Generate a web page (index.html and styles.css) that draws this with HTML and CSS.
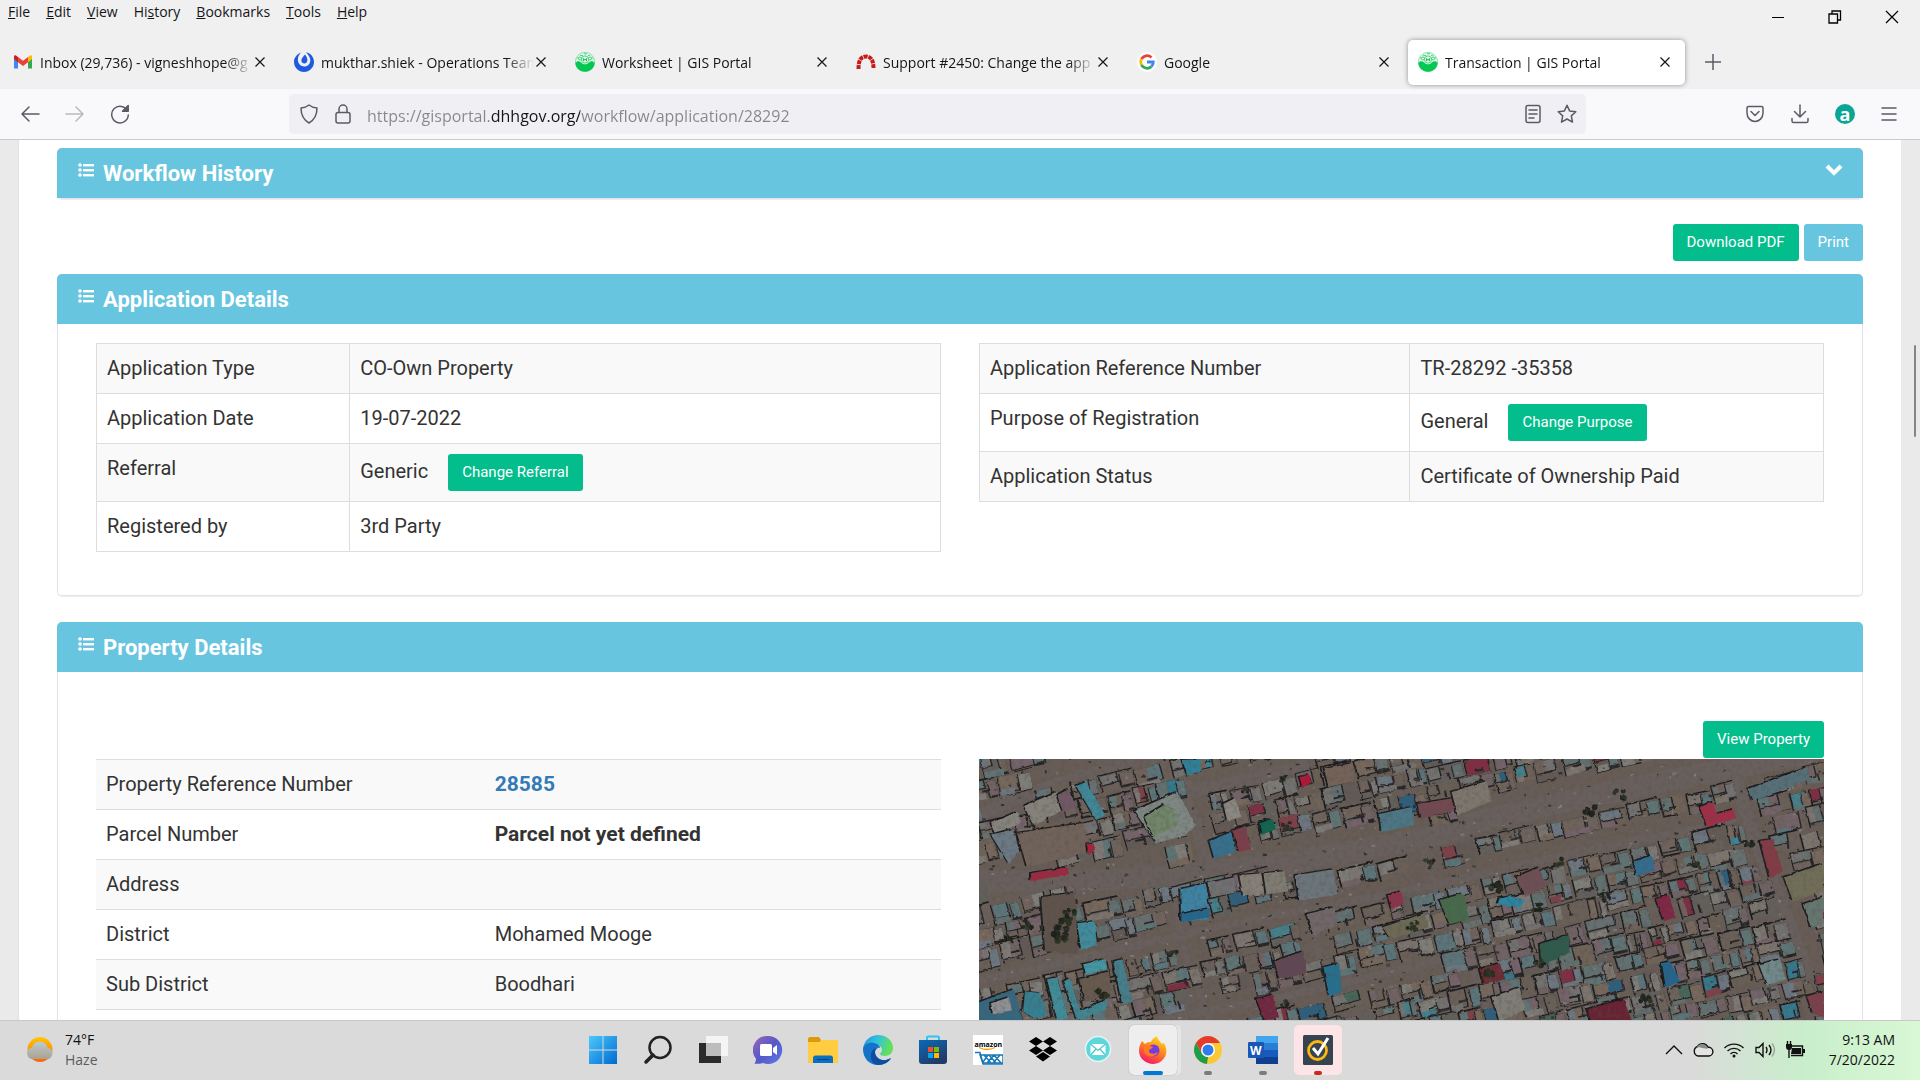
FILE: index.html
```html
<!DOCTYPE html>
<html lang="en">
<head>
<meta charset="utf-8">
<title>Transaction | GIS Portal</title>
<link rel="stylesheet" href="styles.css">
</head>
<body>
<svg class="defs" width="0" height="0" aria-hidden="true">
  <defs>
    <symbol id="close" viewBox="0 0 10 10"><path d="M.5.5l9 9M9.5.5l-9 9" fill="none" stroke="currentColor" stroke-width="1.2"/></symbol>
    <symbol id="list" viewBox="0 0 16 14"><g fill="currentColor"><circle cx="2" cy="2" r="1.8"/><circle cx="2" cy="7" r="1.8"/><circle cx="2" cy="12" r="1.8"/><rect x="5" y="1" width="11" height="2.4"/><rect x="5" y="6" width="11" height="2.4"/><rect x="5" y="11" width="11" height="2.4"/></g></symbol>
    <symbol id="gis" viewBox="0 0 20 20"><circle cx="10" cy="10" r="9.6" fill="#e2f8e9" stroke="#6fdc97" stroke-width=".8"/><g fill="none" stroke="#2fc96b" stroke-width=".8"><path d="M5 3.500h3M9 1.800h3M13 3.500h2M2 6h2M16 6h2"/><circle cx="5" cy="6.500" r="1.500"/><circle cx="15" cy="6.500" r="1.500"/><circle cx="10" cy="7.500" r="3.600"/></g><path d="M8.600 6.200v3M11.400 6.200v3M8.600 7.700h2.800" stroke="#0fc157" stroke-width="1"/><path d="M.4 11C2 8.500 4.500 8.600 6.500 10.800c2 2 5 2 7 0 2-2.200 4.500-2.300 6.100.2C19.400 16 15.300 19.700 10 19.700S.6 16 .4 11z" fill="#05c853"/></symbol>
  </defs>
</svg>

<header class="browser">
  <div class="menubar">
    <nav class="menus">
      <button><u>F</u>ile</button><button><u>E</u>dit</button><button><u>V</u>iew</button><button>Hi<u>s</u>tory</button><button><u>B</u>ookmarks</button><button><u>T</u>ools</button><button><u>H</u>elp</button>
    </nav>
    <div class="window-controls">
      <button aria-label="Minimize"><svg width="14" height="14"><path d="M1 7.500h12" stroke="#000"/></svg></button>
      <button aria-label="Restore"><svg width="14" height="14" fill="none" stroke="#000" stroke-width="1.300"><path d="M1 4h8.500v9H1zM4 4V1h8.500v9H9.500"/></svg></button>
      <button aria-label="Close"><svg width="14" height="14"><path d="M1 1l12 12M13 1L1 13" stroke="#000" stroke-width="1.200"/></svg></button>
    </div>
  </div>

  <div class="tabs">
    <div class="tab"><svg class="fav" viewBox="0 0 20 20"><path d="M1 4.500v12h4V9z" fill="#4285f4"/><path d="M19 4.500v12h-4V9z" fill="#34a853"/><path d="M15 5l2-1.500c1-.7 2 0 2 1.200V7l-4 3.200z" fill="#fbbc04"/><path d="M5 5l5 3.800L15 5v5.200L10 14l-5-3.800z" fill="#ea4335"/><path d="M1 7V4.700c0-1.200 1-1.900 2-1.200L5 5v5.200z" fill="#c5221f"/></svg><span class="tab-title">Inbox (29,736) - vigneshhope@g</span><button class="tab-close" aria-label="Close tab"><svg><use href="#close"/></svg></button></div>
    <div class="tab"><svg class="fav" viewBox="0 0 20 20"><path d="M12 .3C17 1.200 20 5.500 20 10c0 5.500-4.500 10-10 10S0 15.500 0 10C0 5.500 3 2 7 .5 4.500 3 3.700 5.500 3.900 8.600 4.200 12 7 14.500 10.300 14.500c3.400 0 6.200-2.700 6-6.500C16.200 5.500 14.500 3 12 .3z" fill="#1e5ae0"/><path d="M11 2.500c2 2.400 2.600 4.600 2.300 6.300-.3 1.900-1.700 2.900-3.300 2.700-1.800-.2-2.900-1.700-2.600-3.500C7.700 6.200 9.500 4 11 2.500z" fill="#1e5ae0"/></svg><span class="tab-title">mukthar.shiek - Operations Team</span><button class="tab-close" aria-label="Close tab"><svg><use href="#close"/></svg></button></div>
    <div class="tab"><svg class="fav"><use href="#gis"/></svg><span class="tab-title">Worksheet | GIS Portal</span><button class="tab-close" aria-label="Close tab"><svg><use href="#close"/></svg></button></div>
    <div class="tab"><svg class="fav" viewBox="0 0 20 20"><path d="M2.500 17C2.500 8 5 4.500 10 4.500S17.500 8 17.500 17" fill="none" stroke="#c71a1a" stroke-width="4" stroke-dasharray="3.900 .8"/></svg><span class="tab-title">Support #2450: Change the app</span><button class="tab-close" aria-label="Close tab"><svg><use href="#close"/></svg></button></div>
    <div class="tab"><svg class="fav" viewBox="0 0 20 20"><circle cx="10" cy="10" r="10" fill="#fff"/><g fill="none" stroke-width="2.800"><path d="M14.500 5.600A6.300 6.300 0 0 0 4.500 7" stroke="#ea4335"/><path d="M4.500 7a6.300 6.300 0 0 0 0 6" stroke="#fbbc05"/><path d="M4.500 13a6.300 6.300 0 0 0 9.800 1.600" stroke="#34a853"/><path d="M14.300 14.600A6.300 6.300 0 0 0 16.300 10H10" stroke="#4285f4"/></g></svg><span class="tab-title">Google</span><button class="tab-close" aria-label="Close tab"><svg><use href="#close"/></svg></button></div>
    <div class="tab active"><svg class="fav"><use href="#gis"/></svg><span class="tab-title">Transaction | GIS Portal</span><button class="tab-close" aria-label="Close tab"><svg><use href="#close"/></svg></button></div>
    <button class="new-tab" aria-label="New tab"><svg width="16" height="16"><path d="M8 0v16M0 8h16" stroke="#5b5b66" stroke-width="1.500"/></svg></button>
  </div>

  <div class="toolbar">
    <div class="nav-buttons">
      <button aria-label="Back"><svg width="20" height="20" class="line"><path d="M19 10H2M9 3l-7 7 7 7"/></svg></button>
      <button aria-label="Forward" disabled><svg width="20" height="20" class="line"><path d="M1 10h17M11 3l7 7-7 7"/></svg></button>
      <button aria-label="Reload"><svg width="20" height="20" class="line"><path d="M17.500 7A8.300 8.300 0 1 0 18.300 11M12.500 7.200h5.700V1.500z"/><path d="M13.500 6.800h4.500V2.300z" fill="currentColor"/></svg></button>
    </div>
    <div class="urlbar">
      <svg width="20" height="20" class="line"><path d="M10 1c2.500 2 5 2.800 8 3 0 7-2 11.500-8 15-6-3.500-8-8-8-15 3-.2 5.500-1 8-3z"/></svg>
      <svg width="18" height="20" class="line"><rect x="2" y="8.500" width="14" height="10.500" rx="2"/><path d="M5 8.500V5a4 4 0 0 1 8 0v3.500"/></svg>
      <input class="url" type="text" aria-label="Address" value="https://gisportal.dhhgov.org/workflow/application/28292">
      <button aria-label="Reader view"><svg width="18" height="20" class="line"><rect x="2" y="1.500" width="14" height="17" rx="2"/><path d="M5 6h8M5 10h8M5 14h5"/></svg></button>
      <button aria-label="Bookmark"><svg width="20" height="20" class="line"><path d="M10 1.300l2.600 5.600 6.200.8-4.500 4.200 1.200 6.200L10 15l-5.500 3.100 1.200-6.200L1.200 7.700l6.200-.8z"/></svg></button>
    </div>
    <div class="tools">
      <button aria-label="Pocket"><svg width="20" height="20" class="line"><path d="M3.500 2.500h13c1 0 1.500.5 1.500 1.500v5c0 5-4 8.500-8 8.500S2 14 2 9V4c0-1 .5-1.500 1.500-1.500z"/><path d="M6 7.500l4 4 4-4"/></svg></button>
      <button aria-label="Downloads"><svg width="20" height="20" class="line"><path d="M10 1v12M4.500 7.500L10 13l5.500-5.500M2 14.500V17c0 1 .5 1.500 1.500 1.500h13c1 0 1.500-.5 1.500-1.500v-2.500"/></svg></button>
      <button class="ext" aria-label="Extension">a</button>
      <button aria-label="Menu"><svg width="18" height="18" class="line"><path d="M2 3h14M2 9h14M2 15h14"/></svg></button>
    </div>
  </div>
</header>

<main class="viewport">
  <div class="page">
    <section class="panel">
      <h2 class="panel-head"><svg class="list"><use href="#list"/></svg>Workflow History
        <button class="toggle" aria-label="Expand"><svg width="18" height="12"><path d="M2 2l7 7 7-7" fill="none" stroke="#fff" stroke-width="4"/></svg></button></h2>
    </section>

    <div class="actions"><button class="btn">Download PDF</button><button class="btn info">Print</button></div>

    <section class="panel">
      <h2 class="panel-head"><svg class="list"><use href="#list"/></svg>Application Details</h2>
      <div class="panel-body">
        <table class="data bordered">
          <tr><th class="w30">Application Type</th><td>CO-Own Property</td></tr>
          <tr><th>Application Date</th><td>19-07-2022</td></tr>
          <tr><th>Referral</th><td>Generic<button class="btn inline">Change Referral</button></td></tr>
          <tr><th>Registered by</th><td>3rd Party</td></tr>
        </table>
        <table class="data bordered">
          <tr><th class="w51">Application Reference Number</th><td>TR-28292 -35358</td></tr>
          <tr><th>Purpose of Registration</th><td>General<button class="btn inline">Change Purpose</button></td></tr>
          <tr><th>Application Status</th><td>Certificate of Ownership Paid</td></tr>
        </table>
      </div>
    </section>

    <section class="panel">
      <h2 class="panel-head"><svg class="list"><use href="#list"/></svg>Property Details</h2>
      <div class="property-actions"><button class="btn">View Property</button></div>
      <div class="panel-body property">
        <table class="data">
          <tr><th class="w46">Property Reference Number</th><td><a href="#28585">28585</a></td></tr>
          <tr><th>Parcel Number</th><td><strong>Parcel not yet defined</strong></td></tr>
          <tr><th>Address</th><td></td></tr>
          <tr><th>District</th><td>Mohamed Mooge</td></tr>
          <tr><th>Sub District</th><td>Boodhari</td></tr>
          <tr><th>&nbsp;</th><td></td></tr>
        </table>
        <svg class="satellite" id="satellite" viewBox="0 0 844 300" preserveAspectRatio="xMinYMin slice" role="img" aria-label="Satellite view"></svg>
      </div>
    </section>
  </div>
  <div class="scroll-thumb"></div>
</main>

<footer class="taskbar">
  <div class="weather">
    <svg width="30" height="28" viewBox="0 0 30 28"><defs><linearGradient id="sun" x2="0" y2="1"><stop stop-color="#ffc800"/><stop offset="1" stop-color="#f7630c"/></linearGradient><linearGradient id="haze" x2="0" y2="1"><stop stop-color="#b9cddc"/><stop offset="1" stop-color="#a8a494"/></linearGradient></defs><circle cx="15" cy="13.500" r="12.500" fill="url(#sun)"/><path d="M6 23a6 6 0 0 1 1-11.500 8 8 0 0 1 15.500 0 6 6 0 0 1 1 11.500z" fill="url(#haze)" opacity=".95"/></svg>
    <div><div>74°F</div><div class="dim">Haze</div></div>
  </div>
  <div class="apps">
    <button aria-label="Start"><svg viewBox="0 0 30 30"><defs><linearGradient id="win" x2="1" y2="1"><stop stop-color="#4cc9fd"/><stop offset="1" stop-color="#0069d0"/></linearGradient></defs><path d="M1 1h13.500v13.500H1zM15.500 1H29v13.500H15.500zM1 15.500h13.500V29H1zM15.500 15.500H29V29H15.500z" fill="url(#win)"/></svg></button>
    <button aria-label="Search"><svg viewBox="0 0 30 30" fill="none" stroke="#222"><circle cx="17" cy="12.500" r="10.500" stroke-width="2.500"/><path d="M10 20l-7 7" stroke-width="3.500" stroke-linecap="round"/></svg></button>
    <button aria-label="Task view"><svg viewBox="0 0 30 30"><path d="M1 8h22v20H1z" fill="#2b2b2b"/><path d="M8 1h22v20H8z" fill="#f6f6f6" opacity=".95"/><path d="M8 8h15v13H8z" fill="#bdbdbd"/></svg></button>
    <button aria-label="Chat"><svg viewBox="0 0 30 30"><defs><linearGradient id="chat" x2="1" y2="1"><stop stop-color="#9a68b5"/><stop offset=".5" stop-color="#5558c8"/><stop offset="1" stop-color="#5b7de8"/></linearGradient></defs><path d="M15 1a14 14 0 1 1-5 27c-3 1-6 1-8.500.7.900-1.500 1.500-3 1.500-5A14 14 0 0 1 15 1z" fill="url(#chat)"/><rect x="7" y="9" width="12" height="12" rx="1.500" fill="#fff"/><path d="M20 13l4-3v10l-4-3z" fill="#fff"/></svg></button>
    <button aria-label="File Explorer"><svg viewBox="0 0 30 30"><path d="M0 4c0-1 1-2 2-2h9l2 3-2 4H0z" fill="#dd9a06"/><path d="M0 7h12l2-2h16v23H0z" fill="#ffcd3f"/><path d="M5 28v-5c0-1.500 1-2.500 2.500-2.500h15c1.500 0 2.500 1 2.500 2.500v5z" fill="#0a6fc0"/><path d="M9 24.500h12" stroke="#05447e"/></svg></button>
    <button aria-label="Edge"><svg viewBox="0 0 30 30"><defs><linearGradient id="ed" x2="1" y2=".3"><stop stop-color="#1b8fe0"/><stop offset=".5" stop-color="#33c2dc"/><stop offset="1" stop-color="#63e05a"/></linearGradient></defs><path d="M0 14C1 5 8 0 15 0c9 0 15 6 15 13 0 5-4 8-8 8-3 0-5-1-5-2s2-2 2-4c0-3-3-5-6-5-6 0-12 4-13 4z" fill="url(#ed)"/><path d="M0 14c1-5 6-7 11-6 4 .7 6 3 6 5-3-1-5 1-5 4 0 5 5 9 11 8 2-.4 4-1.500 5-2-2 4-7 7-13 7C6 30 0 23 0 14z" fill="#1473c8"/><path d="M12 17c0 5 5 9 11 8 2-.4 4-1.500 5-2-2 4-7 7-13 7-5-1-8-5-7-10 0-4 3-7 7-7-2 1-3 2-3 4z" fill="#0d4f9e"/></svg></button>
    <button aria-label="Store"><svg viewBox="0 0 30 30"><defs><linearGradient id="st" x2=".6" y2="1"><stop stop-color="#0a6ab8"/><stop offset="1" stop-color="#223a68"/></linearGradient></defs><path d="M9 7V3c0-1 .5-1.500 1.500-1.500h9c1 0 1.500.5 1.500 1.500v4" fill="none" stroke="#2cc4f4" stroke-width="2"/><path d="M1 5h28v21c0 2-1 3-3 3H4c-2 0-3-1-3-3z" fill="url(#st)"/><path d="M10 12h5v5h-5z" fill="#f25022"/><path d="M16 12h5v5h-5z" fill="#7fba00"/><path d="M10 18h5v5h-5z" fill="#00a4ef"/><path d="M16 18h5v5h-5z" fill="#ffb900"/></svg></button>
    <button aria-label="Amazon"><svg viewBox="0 0 30 30"><path d="M0 0h30v30H0z" fill="#fff"/><text x="1.500" y="11.500" class="amazon">amazon</text><path d="M6 12.500q8 4 16 0" fill="none" stroke="#f90" stroke-width="1.300"/><path d="M2 17.500h5L10 29h20" fill="none" stroke="#1878b8" stroke-width="1.500"/><path d="M7 20h23v8H10zM11 20l7 8M16 20l7 8M21 20l7 8M15 20l-5 7M21 20l-7 8M27 20l-7 8" fill="none" stroke="#1878b8" stroke-width="1.500"/></svg></button>
    <button aria-label="Dropbox"><svg viewBox="0 0 30 30"><path d="M8 2l7 4.500L8 11 1 6.500zM22 2l7 4.500-7 4.500-7-4.500zM8 11l7 4.500L8 20l-7-4.500zM22 11l7 4.500-7 4.500-7-4.500zM8 21.500l7-4.500 7 4.500-7 5z" fill="#000"/></svg></button>
    <button aria-label="Mail"><svg viewBox="0 0 30 30"><circle cx="15" cy="14" r="12.500" fill="#5cd8dc" stroke="#e8f4f4" stroke-width="1.500"/><path d="M7.500 9h15v11h-15z" fill="#fff"/><path d="M7.500 9l7.500 6.500L22.500 9M7.500 20l5.500-6M22.500 20L17 14" fill="none" stroke="#45c8d2" stroke-width="1.200"/></svg></button>
    <button class="focused" aria-label="Firefox"><svg viewBox="0 0 30 30"><defs><linearGradient id="ff" x1=".8" y1="0" x2=".3" y2="1"><stop stop-color="#ffe226"/><stop offset=".45" stop-color="#ff8a16"/><stop offset="1" stop-color="#f5156c"/></linearGradient></defs><path d="M4 6l3 3c2-2 4-2 6-2 1-3 3-4 6-6 0 3 3 5 5 8l2-1c2 4 3 7 2 11-1.500 6-7 10-13 10S1 24 1 16c0-4 1-7 3-10z" fill="url(#ff)"/><circle cx="15.500" cy="15.500" r="6" fill="#7a3bdc"/><path d="M6 11c4-2 6 0 9 1-1 2-4 2-4 4 0 3 5 4 9 1-2 6-13 6-14-1z" fill="#ff7a25"/></svg></button>
    <button class="running" aria-label="Chrome"><svg viewBox="0 0 30 30"><circle cx="15" cy="15" r="14" fill="#fcc934"/><path d="M15 8h12.100A14 14 0 0 0 2.900 8L9 18.500z" fill="#e53a2e"/><path d="M2.900 8L9 18.500A7 7 0 0 0 15 22l-1 7A14 14 0 0 1 2.900 8z" fill="#1e9e4a"/><path d="M21 18.500L15 29h-1l3.500-7z" fill="#fcc934"/><circle cx="15" cy="15" r="7" fill="#fff"/><circle cx="15" cy="15" r="5.500" fill="#2f7de9"/></svg></button>
    <button class="running" aria-label="Word"><svg viewBox="0 0 30 30"><path d="M8 1h22v7H8z" fill="#41a5ee"/><path d="M8 8h22v7H8z" fill="#2b7cd3"/><path d="M8 15h22v7H8z" fill="#185abd"/><path d="M8 22h22v7H8z" fill="#103f91"/><rect x="0" y="7" width="16" height="16" rx="1" fill="#1a56b4"/><text x="2" y="19.500" class="word">W</text></svg></button>
    <button class="running alert" aria-label="Norton"><svg viewBox="0 0 30 30"><rect width="30" height="30" rx="1.500" fill="#36444f"/><circle cx="14.500" cy="15.500" r="9" fill="none" stroke="#fdb714" stroke-width="2.800"/><path d="M10 13l5 6L25 3" fill="none" stroke="#fff" stroke-width="3"/></svg></button>
  </div>
  <div class="tray">
    <svg width="18" height="12" class="ink"><path d="M1 10l8-8 8 8"/></svg>
    <svg width="22" height="16" class="ink"><path d="M6 14a5 5 0 0 1-.5-9.500 6 6 0 0 1 10.500.8A4.300 4.300 0 0 1 17 14z" fill="#e4e4e4"/><path d="M4 6.500c3-3 7 1 12 0-1-5-9-7-12 0z" fill="#8a8a8a" stroke="none"/></svg>
    <svg width="22" height="16" class="ink"><path d="M1.500 6a13.500 13.500 0 0 1 19 0M4.500 9a9.300 9.300 0 0 1 13 0M7.500 12a5 5 0 0 1 7 0"/><circle cx="11" cy="14" r="1.500" fill="#111" stroke="none"/></svg>
    <svg width="22" height="16" class="ink"><path d="M2 5.500h3l4-4v13l-4-4H2zM12 5q2 3 0 6M15 3q4 5 0 10"/><path d="M18 1.500q5 6 0 13" opacity=".3"/></svg>
    <svg width="22" height="18" class="ink"><path d="M7 5h10.500v9.500H6"/><path d="M7 7h9v6H6zM18 8h2v4h-2zM1 3h6v3c0 2-1 3-3 3S1 8 1 6z" fill="#111" stroke="none"/><path d="M2.500 0v3M5.500 0v3M4 8v9"/></svg>
    <div class="clock"><div>9:13 AM</div><div>7/20/2022</div></div>
  </div>
</footer>
<script src="satellite.js"></script>
</body>
</html>
```
FILE: styles.css
```css
* { box-sizing: border-box; }
body {
  margin: 0;
  height: 100vh;
  display: flex;
  flex-direction: column;
  overflow: hidden;
  background: #eaeaea;
  color: #333;
  font-family: Roboto, "Liberation Sans", sans-serif;
}
button {
  border: 0;
  padding: 0;
  background: none;
  color: inherit;
  font: inherit;
}
.defs { position: absolute; }
.line { fill: none; stroke: currentColor; stroke-width: 1.5; stroke-linecap: round; stroke-linejoin: round; }
.line, .fav, .list { flex: none; }

/* Browser window */
.browser {
  flex: none;
  background: #f0f0f0;
  color: #15141a;
  font-family: "Open Sans", "Noto Sans", sans-serif;
  font-size: 14px;
}
.menubar { display: flex; justify-content: space-between; height: 35px; padding: 2px 21px 0 8px; }
.menus { display: flex; gap: 16px; height: 20px; line-height: 20px; }
.window-controls { display: flex; gap: 43px; align-items: center; height: 29px; }
.window-controls button, .toolbar button { display: flex; align-items: center; }
.tabs { display: flex; gap: 4px; height: 54px; padding: 4px 3px; align-items: center; }
.tab {
  flex: 0 1 277px;
  min-width: 0;
  height: 45px;
  display: flex;
  align-items: center;
  gap: 2px;
  padding: 0 15px 0 10px;
  border-radius: 5px;
}
.tab.active { background: #fff; box-shadow: 0 0 5px rgba(0, 0, 0, .4); }
.fav { width: 20px; height: 20px; }
.tab-title {
  flex: 1;
  min-width: 0;
  margin-left: 5px;
  overflow: hidden;
  white-space: nowrap;
  mask-image: linear-gradient(to left, transparent, #000 28px);
}
.tab-close { flex: none; width: 10px; display: flex; }
.tab-close svg { width: 10px; height: 10px; }
.new-tab { margin-left: 16px; display: flex; }
.toolbar {
  display: flex;
  align-items: center;
  height: 51px;
  padding: 0 22px 0 20px;
  background: #f9f9fb;
  border-bottom: 1px solid #ccc;
  color: #5b5b66;
}
.nav-buttons { display: flex; gap: 25px; width: 269px; }
.nav-buttons button:disabled { opacity: .4; }
.urlbar {
  flex: 1;
  display: flex;
  align-items: center;
  gap: 15px;
  height: 40px;
  padding: 0 9px 0 10px;
  margin-right: 159px;
  border-radius: 5px;
  background: #f0f0f4;
}
.url {
  flex: 1;
  min-width: 0;
  border: 0;
  padding: 3px 0 0;
  font: 16px/24px "Open Sans", "Noto Sans", sans-serif;
  background: linear-gradient(to right, #87868c 124px, #15141a 124px, #15141a 213px, #87868c 213px);
  background-clip: text;
  -webkit-text-fill-color: transparent;
}
.tools { display: flex; align-items: center; gap: 25px; }
.toolbar .ext {
  justify-content: center;
  width: 20px;
  height: 20px;
  border-radius: 50%;
  background: #0aa594;
  color: #fff;
  font-weight: 700;
  font-size: 18px;
  line-height: 16px;
}

/* Portal page */
.viewport { flex: 1; min-height: 0; overflow: hidden; position: relative; }
.page {
  margin: 0 19px 0 18px;
  padding: 8px 38px 0;
  min-height: 100%;
  background: #fff;
  border-left: 1px solid #e2e2e2;
}
.panel { border: 1px solid #e3e3e8; border-top: 0; border-radius: 5px; box-shadow: 0 1px 1px rgba(0, 0, 0, .08); }
.panel-head {
  display: flex;
  align-items: center;
  gap: 9px;
  margin: 0 -1px;
  height: 50px;
  padding: 0 20px 0 21px;
  border-radius: 5px 5px 0 0;
  background: #67c5df;
  color: #fff;
  font-size: 22px;
  font-weight: 700;
}
.list { width: 16px; height: 14px; margin-bottom: 6px; }
.toggle { display: flex; margin: 0 0 6px auto; }
.actions { display: flex; justify-content: flex-end; gap: 5px; padding: 25px 0 13px; }
.btn {
  height: 37px;
  padding: 0 14px;
  border-radius: 3px;
  background: #03bd8c;
  color: #fff;
  font-size: 15px;
  line-height: 37px;
}
.btn.info { background: #67c5df; }
.btn.inline { margin-left: 20px; vertical-align: middle; }
.panel-body {
  display: grid;
  grid-template-columns: 1fr 1fr;
  gap: 38px;
  align-items: start;
  padding: 19px 38px 43px;
}
.panel + .panel { margin-top: 26px; }
.property-actions { display: flex; justify-content: flex-end; padding: 49px 38px 1px; }
.panel-body.property { padding-top: 0; }
.data { width: 100%; border-collapse: collapse; table-layout: fixed; font-size: 20px; line-height: 29px; }
.data th, .data td {
  padding: 10px;
  border-top: 1px solid #ddd;
  text-align: left;
  vertical-align: top;
  font-weight: 400;
}
.data.bordered th, .data.bordered td { border: 1px solid #ddd; }
.data tr:nth-child(odd) { background: #f9f9f9; }
.data .btn { display: inline-block; }
.data a { color: #337ab7; text-decoration: none; }
.data a, .data strong { font-size: 21px; font-weight: 700; }
.w30 { width: 30%; }
.w51 { width: 51%; }
.w46 { width: 46%; }
.satellite { display: block; width: 100%; height: 300px; background: #6b625c; }
.scroll-thumb { position: absolute; right: 4px; top: 205px; width: 2px; height: 92px; border-radius: 1px; background: #858585; }

/* Taskbar */
.taskbar {
  flex: none;
  display: grid;
  grid-template-columns: 1fr auto 1fr;
  align-items: center;
  height: 60px;
  padding: 0 25px 2px;
  border-top: 1px solid #c9c9c9;
  background: linear-gradient(to right, #dadada 88%, #c9eecb 94%, #d9f8d5);
  color: #111;
  font: 14px/20px "Open Sans", "Noto Sans", sans-serif;
}
.weather { display: flex; align-items: center; gap: 10px; }
.dim { color: #5c5c5c; }
.apps { display: flex; gap: 7px; }
.apps button {
  position: relative;
  display: grid;
  place-items: center;
  width: 48px;
  height: 50px;
  border-radius: 5px;
}
.apps svg { width: 30px; height: 30px; }
.apps .focused { background: #eee; box-shadow: 0 0 1px #888, 4px 0 0 #e6e6e6; }
.apps .alert { background: #fde4e6; }
.running::after, .focused::after {
  content: "";
  position: absolute;
  bottom: 0;
  left: 50%;
  width: 8px;
  height: 4px;
  margin-left: -4px;
  border-radius: 2px;
  background: #7c7c7c;
}
.focused::after { width: 20px; margin-left: -10px; background: #0078d4; }
.alert::after { background: #c42b1c; }
.amazon { font: 700 7px "Open Sans", sans-serif; }
.word { font: 700 12px "Open Sans", sans-serif; fill: #fff; }
.tray { display: flex; align-items: center; justify-content: flex-end; gap: 9px; }
.ink { fill: none; stroke: #111; stroke-width: 1.4; }
.clock { margin-left: 13px; text-align: right; }
```
FILE: satellite.js
```js
// Draws the town seen from above: plots in rows along the streets, then the landmarks.
(function () {
  var seed = 11;
  function rnd() { seed = (seed * 16807) % 2147483647; return seed / 2147483647; }
  function pick(a) { return a[Math.floor(rnd() * a.length)]; }
  function poly(points, fill) { return '<polygon points="' + points + '" fill="' + fill + '"/>'; }

  var roads = [
    [[0, 122], [123, 121], [223, 113], [323, 101], [456, 77], [493, 64], [593, 41], [740, 11], [844, -8], 15],
    [[0, 56], [73, 26], [160, 0], 8],
    [[197, 20], [215, 60], [227, 104], 8],
    [[165, -5], [215, 32], [330, 6], 8],
    [[0, 222], [150, 188], [250, 165], [330, 150], [456, 126], [600, 92], [760, 62], 5],
    [[180, 262], [330, 232], [456, 202], [600, 168], [760, 128], 5],
    [[753, 10], [775, 80], [800, 140], [830, 220], [844, 280], 9],
    [[440, 75], [456, 130], [490, 200], [520, 290], 4],
    [[310, 105], [330, 160], [350, 235], 4],
    [[190, 120], [205, 190], [240, 290], 4]
  ];
  function nearRoad(x, y) {
    return roads.some(function (r) {
      var w = r[r.length - 1] + 1;
      for (var i = 0; i < r.length - 2; i++) {
        var a = r[i], b = r[i + 1], dx = b[0] - a[0], dy = b[1] - a[1];
        var t = Math.max(0, Math.min(1, ((x - a[0]) * dx + (y - a[1]) * dy) / (dx * dx + dy * dy)));
        if (Math.hypot(x - a[0] - t * dx, y - a[1] - t * dy) < w) return true;
      }
      return false;
    });
  }

  var ground = ['#695e55', '#6b6058', '#635a54', '#6f6458', '#64605c'];
  var walls = ['#73726f', '#7b756e', '#68706f', '#7d7975', '#70635c', '#76685c', '#63706f', '#7f7d78', '#6b6059', '#716464', '#5f7475', '#5c757a', '#74646a', '#6d7780'];
  var bright = ['#35798c', '#7f2f42', '#2f5f7d', '#45808a', '#46665a', '#7f404a', '#3d8394'];
  var out = '<defs><filter id="grain" x="0" y="0" width="100%" height="100%"><feTurbulence type="fractalNoise" baseFrequency=".22" numOctaves="4" seed="4"/><feColorMatrix values="0 0 0 0 .09  0 0 0 0 .08  0 0 0 0 .08  2.4 0 0 0 -1.05"/></filter>' +
    '<filter id="rough" x="0" y="0" width="100%" height="100%"><feTurbulence type="fractalNoise" baseFrequency=".15" numOctaves="2" seed="9"/><feDisplacementMap in="SourceGraphic" scale="3" xChannelSelector="R" yChannelSelector="G"/></filter></defs>';
  out += '<rect width="844" height="300" fill="#675d56"/><g filter="url(#rough)"><rect width="844" height="300" fill="#675d56"/>';
  roads.forEach(function (r) {
    out += '<polyline fill="none" stroke="#69615d" stroke-width="' + r[r.length - 1] * 1.4 + '" points="' + r.slice(0, -1).join(' ') + '"/>';
  });

  for (var v = -20; v < 520; v += 21) {
    for (var u = -90 + rnd() * 20; u < 860;) {
      var w = 16 + rnd() * 20, h = 15 + rnd() * 7;
      var slope = -0.24 + (rnd() - 0.5) * 0.1, lean = 0.25 + (rnd() - 0.5) * 0.1;
      var x = u, y = v + u * -0.22 + (rnd() - 0.5) * 5;
      u += w + 1 + rnd() * 3;
      if (y < -25 || y > 300 || nearRoad(x + w / 2, y + h / 2)) continue;
      var corner = function (px, py) { return (x + px + py * lean).toFixed(1) + ',' + (y + py + px * slope).toFixed(1); };
      var quad = function (a, b, c, d) { return [corner(a, b), corner(c, b), corner(c, d), corner(a, d)].join(' '); };
      out += poly(quad(0, 0, w, h), pick(ground));
      out += '<polyline points="' + (rnd() < 0.5 ? [corner(w, 0), corner(0, 0), corner(0, h)] : [corner(0, 0), corner(0, h), corner(w * 0.6, h)]).join(' ') + '" fill="none" stroke="#1b1a1c" stroke-width="' + (0.8 + rnd() * 1.1).toFixed(1) + '"/>';
      // Roofs stand round the yard, each with its shadow to the lower right.
      var main = rnd() < 0.14 ? pick(bright) : pick(walls);
      var mw = w * (0.35 + rnd() * 0.5), mh = h * (0.4 + rnd() * 0.5);
      out += poly(quad(1, 1, mw + 1.4, mh + 1.2), '#242224') + poly(quad(1, 1, mw, mh), main);
      if (rnd() < 0.4) out += poly(quad(1, 1, mw / 2, mh), pick(walls));
      if (rnd() < 0.75) {
        var sw = w * (0.6 + rnd() * 0.15);
        out += poly(quad(sw - 1.2, h * 0.15, w, h), '#282528') + poly(quad(sw, h * 0.15, w, h * (0.8 + rnd() * 0.2)), pick(walls));
      }
      if (rnd() < 0.6) out += poly(quad(1, h * 0.68, w * (0.4 + rnd() * 0.4), h), rnd() < 0.1 ? pick(bright) : pick(walls));
      if (rnd() < 0.4) out += poly(quad(w * 0.3, h * 0.55, w * 0.6, h * 0.65), '#252426');
      if (rnd() < 0.4) out += poly(quad(w * 0.55, h * 0.5, w * 0.62, h * 0.9), '#252426');
    }
  }
  for (var i = 0; i < 800; i++) {
    out += '<rect x="' + (rnd() * 844).toFixed(1) + '" y="' + (rnd() * 300).toFixed(1) + '" width="' + (1 + rnd() * 3).toFixed(1) + '" height="' + (1 + rnd() * 1.5).toFixed(1) + '" fill="' + pick(['#1f1e20', '#807c78', '#2e2a28', '#8d8d8b', '#242225']) + '" opacity=".75"/>';
  }

  [
    ['155,52 198,33 217,66 207,76 177,84', '#7e8782'], ['165,58 185,46 196,52 197,66 175,79', '#71866a'],
    ['97,27 107,23 126,56 117,61', '#3f8798'], ['12,64 38,53 42,64 16,75', '#85837b'],
    ['45,47 77,33 84,51 54,66', '#85827a'], ['78,36 90,30 97,48 84,53', '#6f5965'],
    ['12,76 34,70 40,92 30,105', '#6b7984'], ['38,74 104,64 112,92 48,108', '#71635a'],
    ['51,114 88,108 90,115 51,122', '#9b2b3f'], ['108,85 113,84 116,92 109,95', '#a5203e'],
    ['230,82 252,73 256,93 235,100', '#35718f'], ['253,72 266,67 272,90 260,93', '#7d3e48'],
    ['244,45 256,39 262,58 248,62', '#8b8881'], ['280,64 293,60 297,70 282,76', '#0d6650'],
    ['201,130 227,124 230,160 202,163', '#3c83a3'], ['202,155 230,149 230,158 202,163', '#24678f'],
    ['228,124 255,118 258,133 232,138', '#707072'], ['260,116 282,114 285,135 264,137', '#857f77'], ['284,114 305,112 309,132 287,135', '#807b73'],
    ['98,164 115,162 118,186 102,190', '#3f8c9d'], ['62,138 96,133 99,195 66,192', '#5e524b'],
    ['0,243 35,230 44,262 0,262', '#35687f'], ['12,244 30,238 33,251 14,255', '#8e9092'],
    ['46,232 62,234 67,256 55,260 44,252', '#358091'], ['68,220 78,218 89,259 78,261', '#3f8c98'],
    ['84,222 91,219 101,252 128,240 127,250 98,261', '#3f8793'], ['104,205 126,200 128,210 107,215', '#4297a3'],
    ['134,202 143,200 154,243 143,245', '#457f8b'], ['100,220 130,212 132,236 106,243', '#675a4e'],
    ['203,1 221,0 222,12 208,16', '#2f8199'], ['320,18 330,16 332,24 323,28', '#b01737'],
    ['345,10 373,4 375,22 349,28', '#736359'], ['438,45 480,38 482,50 441,60', '#734951'],
    ['400,55 432,48 435,66 402,73', '#4c7785'], ['316,116 354,110 358,135 320,142', '#6c7479'],
    ['408,136 422,132 424,145 412,150', '#8f3049'], ['327,155 355,148 358,166 334,176', '#716668'],
    ['403,168 445,154 449,168 411,180', '#6c6a54'], ['472,33 507,22 512,42 478,56', '#7c766d'],
    ['460,141 484,134 490,160 470,165', '#466a4b'], ['344,208 360,204 362,232 350,238', '#26708f'],
    ['295,202 324,192 328,214 300,220', '#614752'], ['277,240 294,235 300,258 286,262', '#722640'],
    ['607,250 644,240 652,262 612,262', '#682033'], ['720,48 733,43 737,55 753,50 757,59 727,68', '#a02f47'],
    ['676,140 689,136 696,158 684,162', '#802744'], ['780,82 793,80 803,112 790,120', '#833a45'],
    ['768,30 827,8 830,20 774,42', '#557079'], ['804,118 844,104 844,132 813,142', '#716e59'],
    ['823,145 844,138 844,164 832,168', '#65776f'], ['654,103 672,96 675,111 657,117', '#336d8e'],
    ['531,137 545,142 540,148 518,145 520,139', '#2c86a1'], ['536,118 560,108 566,128 545,138', '#6d4f55'],
    ['560,185 588,176 590,194 562,206', '#2e5a4c'], ['682,204 690,202 700,222 686,228', '#24658f'],
    ['779,205 800,200 806,220 787,226', '#71898a'], ['827,237 844,232 844,258 833,254', '#7c4049'],
    ['500,210 520,204 526,220 504,225', '#6d2c32'], ['512,238 540,228 546,250 520,262', '#807d77']
  ].forEach(function (s) {
    out += '<polygon points="' + s[0] + '" fill="#1b1a1c" transform="translate(-2 -1)"/>' + poly(s[0], s[1]);
  });
  [[84, 165, 9], [49, 165, 6], [91, 155, 7], [80, 178, 9], [30, 180, 5], [305, 20, 5], [308, 67, 6], [266, 30, 5], [193, 196, 6], [123, 235, 8], [433, 167, 6], [610, 52, 8], [580, 103, 6], [518, 127, 8], [640, 36, 7], [557, 148, 6], [626, 138, 5], [716, 105, 6], [770, 84, 6], [560, 205, 6], [666, 240, 7], [450, 105, 6], [305, 245, 5], [510, 215, 7]].forEach(function (t) {
    for (var k = 0; k < 7; k++) {
      out += '<circle cx="' + (t[0] + (rnd() - 0.5) * t[2] * 1.6).toFixed(1) + '" cy="' + (t[1] + (rnd() - 0.5) * t[2] * 1.3).toFixed(1) + '" r="' + (t[2] * 0.35).toFixed(1) + '" fill="' + pick(['#22271d', '#2c3323', '#1c201a']) + '"/>';
    }
  });
  out += '</g><rect width="844" height="300" filter="url(#grain)" opacity=".4"/>';
  document.getElementById('satellite').innerHTML = out;
})();
```
